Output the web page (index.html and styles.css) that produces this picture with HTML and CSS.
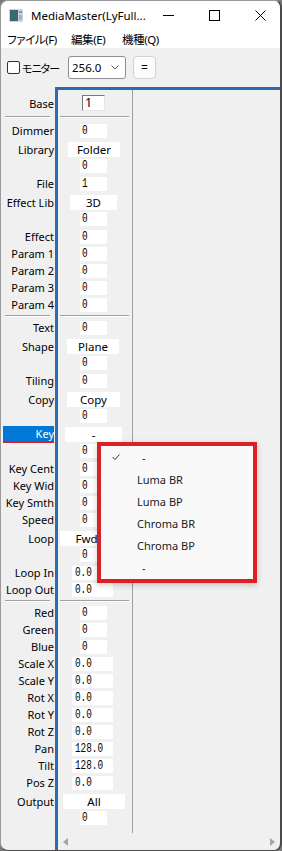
FILE: index.html
```html
<!DOCTYPE html>
<html lang="ja">
<head>
  <meta charset="UTF-8">
  <title>MediaMaster</title>
  <link rel="stylesheet" href="styles.css">
</head>
<body>
<div class="window">

  <div class="titlebar">
    <svg class="app-icon" width="14" height="13" viewBox="0 0 14 13">
      <rect width="14" height="13" fill="#cfd6d9"/>
      <rect x="1" y="1" width="8" height="11" fill="#3d6870"/>
      <rect x="10" y="2" width="3" height="2" fill="#7d9aa0"/>
      <rect x="10" y="6" width="3" height="5" fill="#9fb3b7"/>
    </svg>
    <span class="title">MediaMaster(LyFull...</span>
    <div class="controls">
      <span class="ctl"><svg width="11" height="11"><path d="M0 5.5h11" stroke="#000"/></svg></span>
      <span class="ctl"><svg width="11" height="11"><rect x=".5" y=".5" width="10" height="10" fill="none" stroke="#000"/></svg></span>
      <span class="ctl"><svg width="11" height="11"><path d="M.5.5l10 10M10.5.5l-10 10" stroke="#000"/></svg></span>
    </div>
  </div>

  <div class="menubar">
    <span>ファイル(F)</span>
    <span>編集(E)</span>
    <span>機種(Q)</span>
  </div>

  <div class="toolbar">
    <label class="check"><span class="box"></span><span class="check-text">モニター</span></label>
    <div class="select">256.0
      <svg width="8" height="5"><path d="M.5.5l3.5 3.5 3.5-3.5" fill="none" stroke="#555"/></svg>
    </div>
    <button class="eq">=</button>
  </div>

  <div class="main">
    <div class="labels">
      <div class="row row-base">Base</div>
      <div class="sep"><div class="line"></div></div>
      <div class="row">Dimmer</div>
      <div class="grp"><div class="row">Library</div><div class="row-sub"></div></div>
      <div class="row">File</div>
      <div class="grp"><div class="row">Effect Lib</div><div class="row-sub"></div></div>
      <div class="row">Effect</div>
      <div class="row">Param 1</div>
      <div class="row">Param 2</div>
      <div class="row">Param 3</div>
      <div class="row">Param 4</div>
      <div class="sep thin"><div class="line"></div></div>
      <div class="row">Text</div>
      <div class="grp"><div class="row">Shape</div><div class="row-sub"></div></div>
      <div class="row">Tiling</div>
      <div class="grp"><div class="row">Copy</div><div class="row-sub"></div></div>
      <div class="grp key"><div class="row"><span class="selected">Key</span></div><div class="row-sub"></div></div>
      <div class="row">Key Cent</div>
      <div class="row">Key Wid</div>
      <div class="row">Key Smth</div>
      <div class="row">Speed</div>
      <div class="grp"><div class="row">Loop</div><div class="row-sub"></div></div>
      <div class="row">Loop In</div>
      <div class="row">Loop Out</div>
      <div class="sep thin"><div class="line"></div></div>
      <div class="row">Red</div>
      <div class="row">Green</div>
      <div class="row">Blue</div>
      <div class="row">Scale X</div>
      <div class="row">Scale Y</div>
      <div class="row">Rot X</div>
      <div class="row">Rot Y</div>
      <div class="row">Rot Z</div>
      <div class="row">Pan</div>
      <div class="row">Tilt</div>
      <div class="row">Pos Z</div>
      <div class="grp"><div class="row">Output</div><div class="row-sub"></div></div>
    </div>

    <div class="panel">
      <div class="panel-body">
        <div class="values">
          <div class="row row-base"><span class="base">1</span></div>
          <div class="sep"><div class="line"></div></div>
          <div class="row"><span class="num"><span>0</span></span></div>
          <div class="grp">
            <div class="row"><span class="combo cb-folder">Folder</span></div>
            <div class="row-sub"><span class="num"><span>0</span></span></div>
          </div>
          <div class="row"><span class="num"><span>1</span></span></div>
          <div class="grp">
            <div class="row"><span class="combo cb-3d">3D</span></div>
            <div class="row-sub"><span class="num"><span>0</span></span></div>
          </div>
          <div class="row"><span class="num"><span>0</span></span></div>
          <div class="row"><span class="num"><span>0</span></span></div>
          <div class="row"><span class="num"><span>0</span></span></div>
          <div class="row"><span class="num"><span>0</span></span></div>
          <div class="row"><span class="num"><span>0</span></span></div>
          <div class="sep thin"><div class="line"></div></div>
          <div class="row"><span class="num"><span>0</span></span></div>
          <div class="grp">
            <div class="row"><span class="combo cb-plane">Plane</span></div>
            <div class="row-sub"><span class="num"><span>0</span></span></div>
          </div>
          <div class="row"><span class="num"><span>0</span></span></div>
          <div class="grp">
            <div class="row"><span class="combo cb-copy">Copy</span></div>
            <div class="row-sub"><span class="num"><span>0</span></span></div>
          </div>
          <div class="grp key">
            <div class="row"><span class="combo cb-key">-</span></div>
            <div class="row-sub"><span class="num"><span>0</span></span></div>
          </div>
          <div class="row"><span class="num"><span>0</span></span></div>
          <div class="row"><span class="num"><span>0</span></span></div>
          <div class="row"><span class="num"><span>0</span></span></div>
          <div class="row"><span class="num"><span>0</span></span></div>
          <div class="grp">
            <div class="row"><span class="combo cb-loop">Fwd</span></div>
            <div class="row-sub"><span class="num"><span>0</span></span></div>
          </div>
          <div class="row"><span class="flt"><span>0.0</span></span></div>
          <div class="row"><span class="flt"><span>0.0</span></span></div>
          <div class="sep thin"><div class="line"></div></div>
          <div class="row"><span class="num"><span>0</span></span></div>
          <div class="row"><span class="num"><span>0</span></span></div>
          <div class="row"><span class="num"><span>0</span></span></div>
          <div class="row"><span class="flt"><span>0.0</span></span></div>
          <div class="row"><span class="flt"><span>0.0</span></span></div>
          <div class="row"><span class="flt"><span>0.0</span></span></div>
          <div class="row"><span class="flt"><span>0.0</span></span></div>
          <div class="row"><span class="flt"><span>0.0</span></span></div>
          <div class="row"><span class="flt"><span>128.0</span></span></div>
          <div class="row"><span class="flt"><span>128.0</span></span></div>
          <div class="row"><span class="flt"><span>0.0</span></span></div>
          <div class="grp">
            <div class="row"><span class="combo cb-output">All</span></div>
            <div class="row-sub"><span class="num"><span>0</span></span></div>
          </div>
        </div>
        <div class="canvas"></div>
      </div>
      <div class="hscroll">
        <svg width="5" height="8"><path d="M5 0v8L0 4z" fill="#a6a6a6"/></svg>
        <svg width="5" height="8"><path d="M0 0v8l5-4z" fill="#a6a6a6"/></svg>
      </div>
    </div>

    <!-- open dropdown of Key -->
    <div class="popup">
      <div class="opt">
        <svg class="tick" width="8" height="6"><path d="M.5 3l2.5 2.5L7.5.5" fill="none" stroke="#333"/></svg>
        <span class="dash">-</span>
      </div>
      <div class="opt">Luma BR</div>
      <div class="opt">Luma BP</div>
      <div class="opt">Chroma BR</div>
      <div class="opt">Chroma BP</div>
      <div class="opt"><span class="dash">-</span></div>
    </div>
  </div>

</div>
</body>
</html>
```

FILE: styles.css
```css
html, body {
  margin: 0;
  background: #7a7a7a;
}
body {
  width: 282px;
  height: 851px;
  overflow: hidden;
}
.window {
  width: 282px;
  height: 851px;
  box-sizing: border-box;
  border: 1px solid #9a9a9a;
  border-right: 2px solid #4b4b4b;
  border-bottom-color: #4b4b4b;
  border-radius: 8px;
  overflow: hidden;
  background: #f0f0f0;
  display: flex;
  flex-direction: column;
  font-family: "Noto Sans", "Noto Sans CJK JP", sans-serif;
  font-size: 11px;
  color: #000;
}

/* title bar */
.titlebar {
  height: 29px;
  background: #fff;
  display: flex;
  align-items: center;
}
.app-icon {
  margin-left: 8px;
  flex: none;
}
.title {
  margin-left: 8px;
  font-size: 11.5px;
  white-space: nowrap;
}
.controls {
  margin-left: auto;
  display: flex;
}
.ctl {
  width: 46px;
  height: 29px;
  display: flex;
  align-items: center;
  justify-content: center;
}

/* menu */
.menubar {
  height: 18px;
  background: #fff;
  display: grid;
  grid-template-columns: 64px 51px auto;
  align-items: center;
  padding-left: 6px;
  font-size: 11.5px;
  font-feature-settings: "palt";
  letter-spacing: -0.4px;
}

/* toolbar */
.toolbar {
  height: 39px;
  display: flex;
  align-items: center;
  padding-left: 6px;
}
.check {
  width: 61px;
  display: flex;
  align-items: center;
  font-size: 11px;
}
.check-text {
  font-feature-settings: "palt";
  letter-spacing: -1px;
}
.check .box {
  width: 13px;
  height: 13px;
  box-sizing: border-box;
  border: 1px solid #333;
  border-radius: 2px;
  background: #fff;
  margin-right: 2px;
}
.select {
  width: 58px;
  height: 23px;
  box-sizing: border-box;
  border: 1px solid #8f8f8f;
  border-radius: 3px;
  background: #fff;
  display: flex;
  align-items: center;
  justify-content: space-between;
  padding: 0 6px 0 3px;
  font-size: 11.5px;
}
.eq {
  margin-left: 7px;
  width: 23px;
  height: 23px;
  padding: 0;
  border: 1px solid #d2d2d2;
  border-radius: 4px;
  background: #fbfbfb;
  font-family: "Noto Sans", sans-serif;
  font-size: 12px;
}

/* main area */
.main {
  flex: 1;
  display: flex;
  position: relative;
  min-height: 0;
}
.labels {
  width: 54px;
  padding-top: 3px;
}
.labels .row {
  justify-content: flex-end;
  padding-right: 1px;
  white-space: nowrap;
  overflow: hidden;
}
.panel {
  flex: 1;
  border-top: 3px solid #2b6cb3;
  border-left: 3px solid #2b6cb3;
  display: flex;
  flex-direction: column;
}
.panel-body {
  flex: 1;
  display: flex;
  min-height: 0;
}
.values {
  width: 74px;
  border-right: 1px solid #a0a0a0;
}
.canvas {
  flex: 1;
}
.hscroll {
  height: 17px;
  display: flex;
  align-items: center;
  justify-content: space-between;
  padding: 0 5px;
}

/* rows */
.row {
  height: 17px;
  display: flex;
  align-items: center;
}
.row-base {
  margin-top: 4px;
  height: 18px;
}
.row-sub {
  height: 15px;
  display: flex;
  align-items: center;
}
.grp {
  margin: 2px 0;
}
.grp.key {
  margin-top: 3px;
}
.sep {
  height: 10px;
  display: flex;
  align-items: center;
}
.sep.thin {
  height: 6px;
}
.line {
  flex: 1;
  border-top: 1px solid #a0a0a0;
  border-bottom: 1px solid #fff;
}
.labels .line {
  margin: 0 5px 0 4px;
}
.values .line {
  margin: 0 3px 0 2px;
}

.labels .selected {
  align-self: flex-start;
  width: 51px;
  height: 15px;
  line-height: 15px;
  background: #0078d7;
  color: #fff;
  text-align: right;
  border-bottom: 4px solid #dc2027;
}

/* value boxes */
.base {
  margin-left: 24px;
  width: 23px;
  height: 16px;
  box-sizing: border-box;
  border: 1px solid;
  border-color: #767676 #e6e6e6 #e6e6e6 #767676;
  background: #fff;
  padding-left: 2px;
  font-size: 12.5px;
  line-height: 14px;
}
.num, .flt {
  height: 14px;
  box-sizing: border-box;
  background: #fff;
  display: flex;
  align-items: center;
  font-family: "Liberation Mono", monospace;
  font-size: 12px;
}
.num span, .flt span {
  display: inline-block;
  transform: scaleX(.78);
  transform-origin: left center;
}
.num {
  margin-left: 22px;
  width: 27px;
  padding-left: 2px;
}
.flt {
  margin-left: 14px;
  width: 41px;
  padding-left: 3px;
}
.combo {
  height: 15px;
  line-height: 15px;
  background: #fff;
  text-align: center;
  white-space: nowrap;
  font-size: 11.5px;
}
.cb-folder { margin-left: 10px; width: 52px; }
.cb-3d { margin-left: 12px; width: 47px; }
.cb-plane { margin-left: 9px; width: 52px; }
.cb-copy { margin-left: 9px; width: 53px; }
.cb-key { margin-left: 7px; width: 57px; }
.cb-loop { margin-left: 2px; width: 53px; }
.cb-output { margin-left: 5px; width: 62px; }

/* dropdown */
.popup {
  position: absolute;
  left: 96px;
  top: 355px;
  width: 160px;
  height: 141px;
  box-sizing: border-box;
  border: 4px solid #dc2027;
  background: #f9f9f9;
  box-shadow: 0 2px 6px rgba(0,0,0,0.2);
}
.opt {
  height: 22px;
  display: flex;
  align-items: center;
  padding-left: 36px;
  position: relative;
  font-size: 11px;
  color: #1b1b1b;
}
.tick {
  position: absolute;
  left: 11px;
  top: 8px;
}
.dash {
  margin-left: 5px;
}
```
